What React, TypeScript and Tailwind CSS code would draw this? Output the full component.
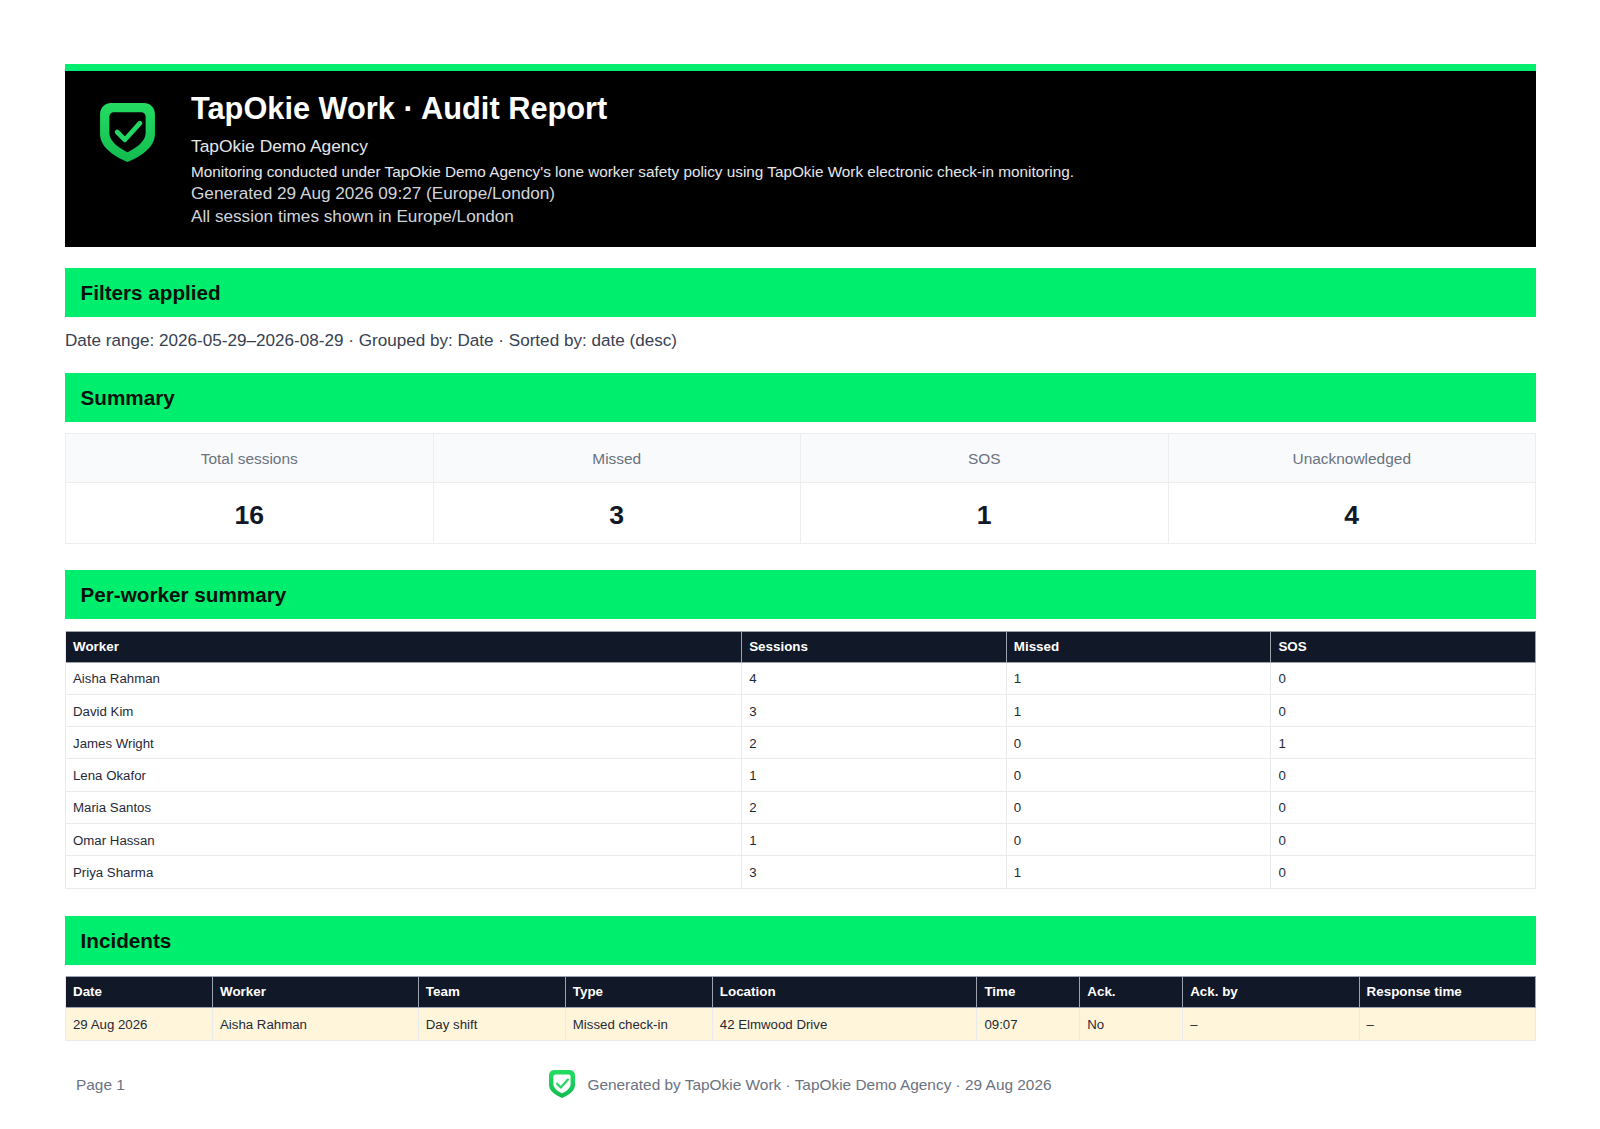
const font = "font-['Liberation_Sans',Arial,sans-serif]";

function Shield({ className, inner, check }: { className: string; inner: string; check: string }) {
  return (
    <svg viewBox="0 0 53 57" className={className} aria-hidden="true">
      <defs>
        <linearGradient id={"g" + inner.slice(1)} x1="0" y1="0" x2="0" y2="1">
          <stop offset="0" stopColor="#24dd62" />
          <stop offset="1" stopColor="#12bb50" />
        </linearGradient>
      </defs>
      <path
        d="M11 0H42C48.5 0 53 4.5 53 11V30C53 42 41 51 26.5 57C12 51 0 42 0 30V11C0 4.5 4.5 0 11 0Z"
        fill={`url(#g${inner.slice(1)})`}
      />
      <path
        d="M13 9H40C42 9 44 11 44 13V29C44 37 35 43.5 26.5 47.5C18 43.5 9 37 9 29V13C9 11 11 9 13 9Z"
        fill={inner}
      />
      <path d="M16.5 28L24 35.5L38.5 19.5" fill="none" stroke={check} strokeWidth="4.6" strokeLinecap="round" strokeLinejoin="round" />
    </svg>
  );
}

function SectionBar({ children, className = "" }: { children: string; className?: string }) {
  return (
    <h2 className={`h-[49px] bg-[#00ee6e] pl-[15.5px] pt-[1px] flex items-center text-[20.7px] font-bold text-[#06110b] ${className}`}>
      {children}
    </h2>
  );
}

function DataTable({ widths, head, rows, rowClass = "", rowHeight = "h-[32.3px]" }: { widths: string[]; head: string[]; rows: string[][]; rowClass?: string; rowHeight?: string }) {
  return (
    <div
      className="grid border-l border-[#e9ebee]"
      style={{ gridTemplateColumns: widths.join(" ") }}
    >
      {head.map((h) => (
        <div key={h} className="h-[32px] bg-[#111827] border-r border-y border-[#9ca3af] text-white font-bold text-[13.4px] pl-[7px] pt-[1px] flex items-center">
          {h}
        </div>
      ))}
      {rows.map((row, i) =>
        row.map((c, j) => (
          <div
            key={i + "-" + j}
            className={`${rowHeight} border-r border-b border-[#e9ebee] text-[#1f2937] text-[13.25px] pl-[7px] pt-[2px] flex items-center ${rowClass}`}
          >
            {c}
          </div>
        ))
      )}
    </div>
  );
}

const stats = [
  ["Total sessions", "16"],
  ["Missed", "3"],
  ["SOS", "1"],
  ["Unacknowledged", "4"],
];

const workers = [
  ["Aisha Rahman", "4", "1", "0"],
  ["David Kim", "3", "1", "0"],
  ["James Wright", "2", "0", "1"],
  ["Lena Okafor", "1", "0", "0"],
  ["Maria Santos", "2", "0", "0"],
  ["Omar Hassan", "1", "0", "0"],
  ["Priya Sharma", "3", "1", "0"],
];

export default function App() {
  return (
    <div className={`${font} w-[1600px] h-[1129px] overflow-hidden bg-white pl-[65px] pr-[64px] pt-[64px]`}>
      <header className="h-[183px] bg-black border-t-[7px] border-[#00ee6e] flex">
        <div className="w-[126px] shrink-0 pl-[35px] pt-[32px]">
          <Shield className="w-[55px] h-[59px]" inner="#000000" check="#22d862" />
        </div>
        <div className="pt-[20px]">
          <h1 className="text-[30.75px] leading-[36px] font-bold text-white">TapOkie Work · Audit Report</h1>
          <p className="mt-[7px] text-[17.4px] leading-[24px] text-[#e5e7eb]">TapOkie Demo Agency</p>
          <p className="mt-[3px] text-[15.3px] leading-[21px] text-[#e5e7eb]">
            Monitoring conducted under TapOkie Demo Agency's lone worker safety policy using TapOkie Work electronic check-in monitoring.
          </p>
          <p className="text-[17.2px] leading-[23px] text-[#d1d5db]">Generated 29 Aug 2026 09:27 (Europe/London)</p>
          <p className="text-[17.2px] leading-[23px] text-[#d1d5db]">All session times shown in Europe/London</p>
        </div>
      </header>

      <SectionBar className="mt-[21px]">Filters applied</SectionBar>
      <p className="h-[56px] pb-[8px] flex items-center text-[17.1px] text-[#374151]">
        Date range: 2026-05-29–2026-08-29 · Grouped by: Date · Sorted by: date (desc)
      </p>

      <SectionBar>Summary</SectionBar>
      <div className="mt-[11px] grid grid-cols-4 border-l border-t border-[#eceef0]">
        {stats.map(([label, value]) => (
          <div key={label} className="border-r border-b border-[#eceef0]">
            <div className="h-[49px] pt-[2px] bg-[#f9fafb] border-b border-[#eceef0] flex items-center justify-center text-[15.45px] text-[#6b7280]">
              {label}
            </div>
            <div className="h-[60px] pt-[6px] flex items-center justify-center text-[26.6px] font-bold text-[#111827]">{value}</div>
          </div>
        ))}
      </div>

      <SectionBar className="mt-[26px]">Per-worker summary</SectionBar>
      <div className="mt-[11.5px]">
        <DataTable
          widths={["46%", "18%", "18%", "18%"]}
          head={["Worker", "Sessions", "Missed", "SOS"]}
          rows={workers}
        />
      </div>

      <SectionBar className="mt-[27px]">Incidents</SectionBar>
      <div className="mt-[11px]">
        <DataTable
          widths={["10%", "14%", "10%", "10%", "18%", "7%", "7%", "12%", "12%"]}
          head={["Date", "Worker", "Team", "Type", "Location", "Time", "Ack.", "Ack. by", "Response time"]}
          rows={[["29 Aug 2026", "Aisha Rahman", "Day shift", "Missed check-in", "42 Elmwood Drive", "09:07", "No", "–", "–"]]}
          rowClass="bg-[#fef5da]"
          rowHeight="h-[33px]"
        />
      </div>

      <footer className="mt-[29px] h-[30px] grid grid-cols-[1fr_auto_1fr] items-center text-[15.42px] text-[#6b7280]">
        <span className="pl-[11px]">Page 1</span>
        <div className="flex items-center gap-[12px]">
          <Shield className="w-[26px] h-[28px] -mt-[1px]" inner="#ffffff" check="#22d862" />
          <span>Generated by TapOkie Work · TapOkie Demo Agency · 29 Aug 2026</span>
        </div>
        <span />
      </footer>
    </div>
  );
}
